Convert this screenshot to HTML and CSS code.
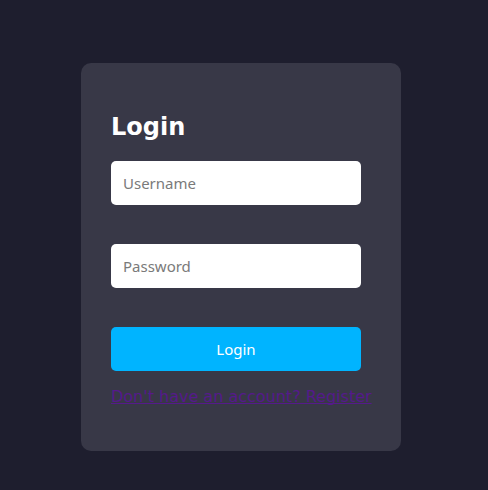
FILE: index.html
```html
<!DOCTYPE html>
<html>
<head>
<meta charset="utf-8">
<link rel="stylesheet" href="styles.css">
</head>
<body>
<div class="page">
  <form class="card">
    <h2 class="title">Login</h2>
    <input class="field" type="text" placeholder="Username">
    <input class="field field-gap" type="password" placeholder="Password">
    <button class="btn" type="button">Login</button>
    <p class="note"><a class="link" href="#">Don't have an account? Register</a></p>
  </form>
</div>
</body>
</html>
```
FILE: styles.css
```css
html, body {
  margin: 0;
  padding: 0;
  background: #1e1e2e;
  height: 100%;
}
.page {
  display: flex;
  justify-content: center;
  padding: 63px 6px 0 0;
  font-family: "DejaVu Sans", sans-serif;
}
.card {
  width: 260px;
  padding: 30px;
  background: #383847;
  border-radius: 10px;
  display: flex;
  flex-direction: column;
  align-items: flex-start;
}
.title {
  margin: 20px 0 20px;
  font-family: "DejaVu Sans", sans-serif;
  font-size: 24px;
  font-weight: bold;
  line-height: 28px;
  color: #ffffff;
}
.field {
  box-sizing: border-box;
  width: 250px;
  height: 44px;
  padding: 0 12px;
  border: none;
  border-radius: 5px;
  background: #ffffff;
  font-family: "Noto Sans", sans-serif;
  font-size: 15px;
  color: #222;
  outline: none;
}
.field::placeholder {
  color: #7a7a7a;
}
.field-gap {
  margin-top: 39px;
}
.btn {
  margin-top: 39px;
  width: 250px;
  height: 44px;
  border: none;
  border-radius: 5px;
  background: #00b4ff;
  color: #ffffff;
  font-family: "Noto Sans", sans-serif;
  font-size: 15px;
}
.note {
  margin: 16px 0 15px;
  font-family: "DejaVu Sans", sans-serif;
  font-size: 16px;
  line-height: 19px;
  white-space: nowrap;
}
.link {
  color: #551a8b;
  text-decoration: underline;
  text-decoration-thickness: 1px;
  text-decoration-skip-ink: none;
}
```
